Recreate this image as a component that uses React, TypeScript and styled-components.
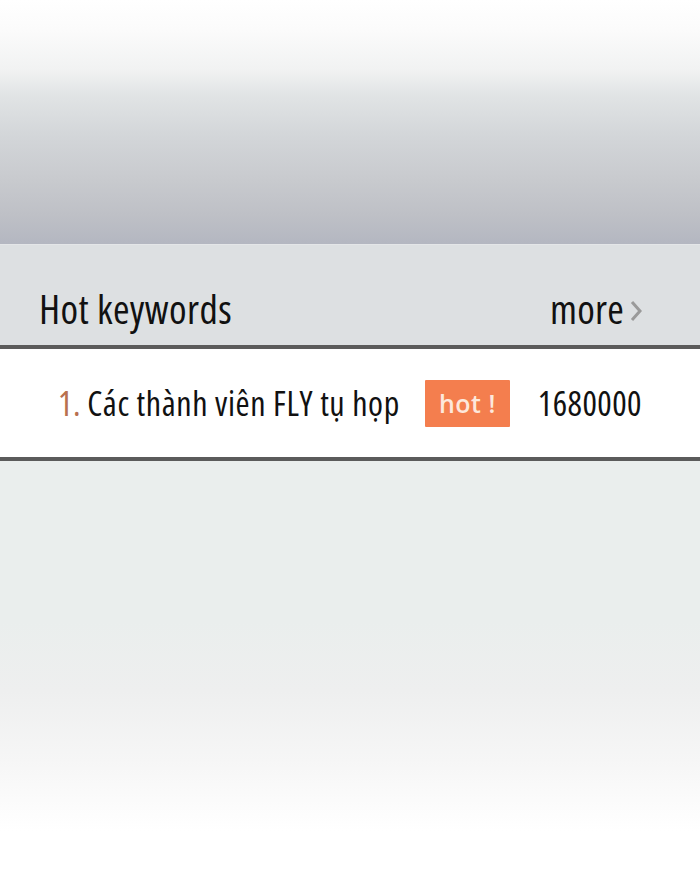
import styled, { createGlobalStyle } from 'styled-components';

const GlobalStyle = createGlobalStyle`
	html, body {
		margin: 0;
		padding: 0;
		background: #ffffff;
	}
	body {
		font-family: "Open Sans", "Liberation Sans", Arial, sans-serif;
		font-stretch: condensed;
	}
`;

const Page = styled.div`
	width: 700px;
	height: 870px;
	display: flex;
	flex-direction: column;
	overflow: hidden;
`;

const Banner = styled.div`
	height: 244px;
	background: linear-gradient(
		to bottom,
		#ffffff 0px,
		#fbfbfb 30px,
		#f1f2f2 70px,
		#e1e4e5 95px,
		#d3d6d9 135px,
		#c8cace 180px,
		#bec0c6 215px,
		#b4b7c1 243px
	);
	border-bottom: 1px solid #e4e6e8;
`;

const Panel = styled.section`
	display: flex;
	flex-direction: column;
`;

const PanelHeader = styled.div`
	height: 104px;
	box-sizing: border-box;
	padding: 26px 58px 0 39px;
	background: #dde0e2;
	display: flex;
	align-items: center;
	justify-content: space-between;
	border-bottom: 4px solid #5b5b5b;
`;

const Title = styled.h2`
	margin: 0;
	font-size: 40px;
	font-weight: 400;
	letter-spacing: 0.4px;
	color: #111111;
`;

const More = styled.a`
	display: flex;
	align-items: center;
	gap: 6px;
	font-size: 40px;
	letter-spacing: 0.2px;
	color: #111111;
	text-decoration: none;
`;

const Chevron = styled.svg`
	width: 12px;
	height: 22px;
	margin-top: 6px;
`;

const List = styled.ol`
	list-style: none;
	margin: 0;
	padding: 0;
	background: #ffffff;
	border-bottom: 4px solid #5b5b5b;
`;

const Row = styled.li`
	height: 108px;
	padding-left: 58px;
	display: flex;
	align-items: center;
	font-size: 34px;
	letter-spacing: 0.6px;
	color: #111111;
	white-space: nowrap;
`;

const Rank = styled.span`
	color: #b8704f;
	margin-right: 6px;
`;

const Keyword = styled.span`
	margin-right: 25px;
`;

const Badge = styled.span`
	width: 85px;
	height: 47px;
	background: #f47e4e;
	color: #fde8dc;
	font-weight: 600;
	font-stretch: normal;
	font-size: 25px;
	display: flex;
	align-items: center;
	justify-content: center;
	margin-right: 28px;
	border-radius: 1px;
	letter-spacing: 0.5px;
`;

const Count = styled.span`
	letter-spacing: 0.4px;
`;

const Backdrop = styled.div`
	flex: 1;
	background: linear-gradient(
		to bottom,
		#eaeeed 0px,
		#eaeeed 160px,
		#eeefef 230px,
		#f6f6f6 300px,
		#ffffff 370px
	);
`;

const keywords = [{ rank: 1, text: 'Các thành viên FLY tụ họp', hot: true, count: 1680000 }];

export default function App() {
	return (
		<Page>
			<GlobalStyle />
			<Banner />
			<Panel>
				<PanelHeader>
					<Title>Hot keywords</Title>
					<More href="#">
						more
						<Chevron viewBox="0 0 12 22">
							<path d="M2 2 L10 11 L2 20" fill="none" stroke="#9a9a9a" strokeWidth="3" />
						</Chevron>
					</More>
				</PanelHeader>
				<List>
					{keywords.map((k) => (
						<Row key={k.rank}>
							<Rank>{k.rank}.</Rank>
							<Keyword>{k.text}</Keyword>
							{k.hot && <Badge>hot !</Badge>}
							<Count>{k.count}</Count>
						</Row>
					))}
				</List>
			</Panel>
			<Backdrop />
		</Page>
	);
}
